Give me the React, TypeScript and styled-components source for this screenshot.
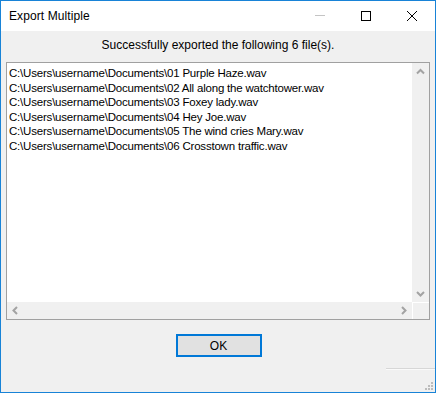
import React from "react";
import styled, { createGlobalStyle } from "styled-components";

const Global = createGlobalStyle`
  html, body { margin: 0; padding: 0; background: #ffffff; }
  * { box-sizing: border-box; }
`;

const FONT = `"Liberation Sans", Arial, sans-serif`;

const Window = styled.div`
  width: 436px;
  height: 393px;
  border: 1px solid #1883d7;
  display: flex;
  flex-direction: column;
  font-family: ${FONT};
  font-size: 12px;
  color: #000;
  background: #f0f0f0;
`;

const TitleBar = styled.div`
  height: 30px;
  background: #ffffff;
  display: flex;
  align-items: center;
`;

const Title = styled.div`
  flex: 1;
  padding-left: 8px;
  font-size: 12px;
  letter-spacing: 0.1px;
  color: #000;
`;

const CaptionButton = styled.div`
  width: 46px;
  height: 30px;
  display: flex;
  align-items: center;
  justify-content: center;
`;

const Body = styled.div`
  flex: 1;
  display: flex;
  flex-direction: column;
`;

const Message = styled.div`
  height: 31px;
  padding-top: 6px;
  line-height: 16px;
  text-align: center;
`;

const ListBox = styled.div`
  margin: 0 5px;
  height: 258px;
  border: 1px solid #a0a0a0;
  background: #ffffff;
  display: grid;
  grid-template-columns: 1fr 17px;
  grid-template-rows: 1fr 17px;
`;

const Items = styled.div`
  padding: 3px 0 0 2px;
  overflow: hidden;
`;

const Item = styled.div`
  height: 14.6px;
  line-height: 14.6px;
  font-size: 11.5px;
  letter-spacing: -0.2px;
  white-space: nowrap;
  overflow: hidden;
`;

const ScrollBar = styled.div<{ $vertical?: boolean }>`
  background: #f0f0f0;
  display: flex;
  flex-direction: ${(p) => (p.$vertical ? "column" : "row")};
  justify-content: space-between;
`;

const Corner = styled.div`
  background: #f0f0f0;
  border-left: 1px solid #ffffff;
  border-top: 1px solid #ffffff;
`;

const ArrowBox = styled.div`
  width: 17px;
  height: 17px;
  display: flex;
  align-items: center;
  justify-content: center;
`;

const Footer = styled.div`
  padding-top: 14px;
  display: flex;
  justify-content: center;
`;

const Button = styled.button`
  width: 86px;
  height: 23px;
  margin-left: 1px;
  border: 2px solid #0078d7;
  background: #e1e1e1;
  font-family: ${FONT};
  font-size: 12px;
  color: #000;
  padding: 0;
  display: flex;
  align-items: center;
  justify-content: center;
`;

const StatusArea = styled.div`
  flex: 1;
  display: flex;
  flex-direction: column;
  align-items: flex-end;
`;

const StatusLine = styled.div`
  margin-top: 11px;
  width: 49px;
  height: 1px;
  background: #d7d7d7;
  border-bottom: 1px solid #fafafa;
  box-sizing: content-box;
`;

const Grip = styled.svg`
  margin-top: 12px;
  margin-right: 1px;
`;

const files = [
  "C:\\Users\\username\\Documents\\01 Purple Haze.wav",
  "C:\\Users\\username\\Documents\\02 All along the watchtower.wav",
  "C:\\Users\\username\\Documents\\03 Foxey lady.wav",
  "C:\\Users\\username\\Documents\\04 Hey Joe.wav",
  "C:\\Users\\username\\Documents\\05 The wind cries Mary.wav",
  "C:\\Users\\username\\Documents\\06 Crosstown traffic.wav",
];

const Chevron = ({ dir }: { dir: "up" | "down" | "left" | "right" }) => {
  const paths: Record<string, string> = {
    up: "M5 10.5 L8.5 7 L12 10.5",
    down: "M5 7 L8.5 10.5 L12 7",
    left: "M10 5 L6.5 8.5 L10 12",
    right: "M7 5 L10.5 8.5 L7 12",
  };
  return (
    <svg width="17" height="17" viewBox="0 0 17 17">
      <path d={paths[dir]} fill="none" stroke="#a3a3a3" strokeWidth="2" />
    </svg>
  );
};

export default function App() {
  return (
    <>
      <Global />
      <Window>
        <TitleBar>
          <Title>Export Multiple</Title>
          <CaptionButton>
            <svg width="10" height="10" viewBox="0 0 10 10">
              <rect x="0" y="4" width="10" height="1" fill="#c4c4c4" />
            </svg>
          </CaptionButton>
          <CaptionButton>
            <svg width="10" height="10" viewBox="0 0 10 10">
              <rect x="0.5" y="0.5" width="9" height="9" fill="none" stroke="#000" strokeWidth="1" />
            </svg>
          </CaptionButton>
          <CaptionButton>
            <svg width="10" height="10" viewBox="0 0 10 10">
              <path d="M0 0 L10 10 M10 0 L0 10" stroke="#000" strokeWidth="1" />
            </svg>
          </CaptionButton>
        </TitleBar>
        <Body>
          <Message>Successfully exported the following 6 file(s).</Message>
          <ListBox>
            <Items>
              {files.map((f) => (
                <Item key={f}>{f}</Item>
              ))}
            </Items>
            <ScrollBar $vertical>
              <ArrowBox>
                <Chevron dir="up" />
              </ArrowBox>
              <ArrowBox>
                <Chevron dir="down" />
              </ArrowBox>
            </ScrollBar>
            <ScrollBar>
              <ArrowBox>
                <Chevron dir="left" />
              </ArrowBox>
              <ArrowBox>
                <Chevron dir="right" />
              </ArrowBox>
            </ScrollBar>
            <Corner />
          </ListBox>
          <Footer>
            <Button>OK</Button>
          </Footer>
          <StatusArea>
            <StatusLine />
            <Grip width="9" height="9" viewBox="0 0 9 9">
              <rect x="6" y="0" width="2" height="2" fill="#bcbcbc" />
              <rect x="3" y="3" width="2" height="2" fill="#bcbcbc" />
              <rect x="6" y="3" width="2" height="2" fill="#bcbcbc" />
              <rect x="0" y="6" width="2" height="2" fill="#bcbcbc" />
              <rect x="3" y="6" width="2" height="2" fill="#bcbcbc" />
              <rect x="6" y="6" width="2" height="2" fill="#bcbcbc" />
            </Grip>
          </StatusArea>
        </Body>
      </Window>
    </>
  );
}
